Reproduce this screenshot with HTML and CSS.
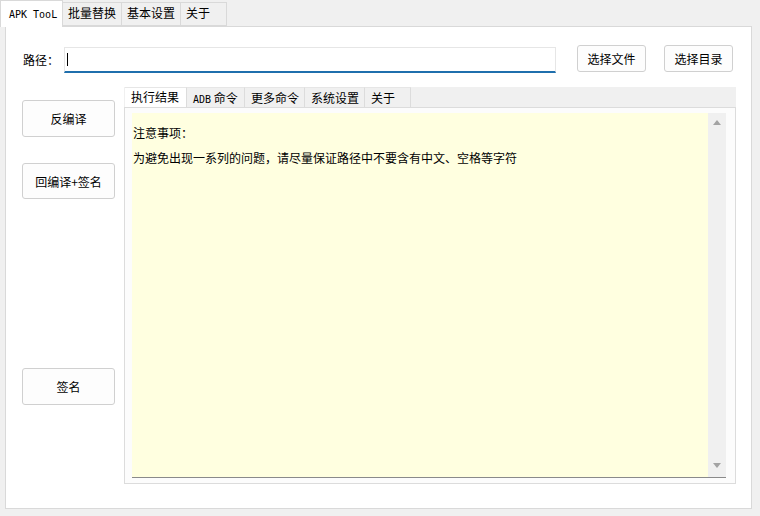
FILE: index.html
```html
<!DOCTYPE html>
<html>
<head>
    <meta charset="UTF-8">
    <title>APK TooL</title>
    <link rel="stylesheet" href="styles.css">
</head>
<body>
    <div class="tabbar">
        <div class="tab active"><span class="latin">APK TooL</span></div>
        <div class="tab">批量替换</div>
        <div class="tab">基本设置</div>
        <div class="tab tab-last">关于</div>
    </div>
    <div class="pane">
        <div class="path-row">
            <label class="path-label">路径：</label>
            <div class="path-input"><span class="caret"></span></div>
            <button class="btn btn-file">选择文件</button>
            <button class="btn btn-dir">选择目录</button>
        </div>
        <div class="main">
            <div class="actions">
                <button class="btn btn-action btn-decompile">反编译</button>
                <button class="btn btn-action btn-build">回编译+签名</button>
                <button class="btn btn-action btn-sign">签名</button>
            </div>
            <div class="subtabs">
                <div class="subtab-bar">
                    <div class="subtab active">执行结果</div>
                    <div class="subtab subtab-adb"><span class="latin">ADB</span> 命令</div>
                    <div class="subtab">更多命令</div>
                    <div class="subtab">系统设置</div>
                    <div class="subtab subtab-last">关于</div>
                </div>
                <div class="subpane">
                    <div class="log">
                        <div class="log-text">
                            <p>注意事项：</p>
                            <p>为避免出现一系列的问题，请尽量保证路径中不要含有中文、空格等字符</p>
                        </div>
                        <div class="scrollbar">
                            <span class="arrow up"></span>
                            <span class="arrow down"></span>
                        </div>
                    </div>
                </div>
            </div>
        </div>
    </div>
</body>
</html>
```
FILE: styles.css
```css
body {
    margin: 0;
    width: 760px;
    height: 516px;
    overflow: hidden;
    background-color: #f0f0f0;
    font-family: "Noto Sans CJK SC", "Liberation Sans", sans-serif;
    font-size: 12px;
    color: #000;
}
.latin {
    font-family: "DejaVu Sans Mono", "Liberation Mono", monospace;
    font-size: 10px;
    white-space: nowrap;
}
.tabbar {
    display: flex;
    height: 26px;
    padding-left: 2px;
}
.tab {
    box-sizing: border-box;
    height: 24px;
    margin-top: 2px;
    padding: 0 5px;
    line-height: 20px;
    white-space: nowrap;
    background-color: #f0f0f0;
    border: 1px solid #d9d9d9;
    border-left: none;
}
.tab-last {
    width: 46px;
}
.tab.active {
    width: 63px;
    height: 27px;
    margin: 0 0 -1px -2px;
    padding: 2px 0 0 8px;
    background-color: #fff;
    border-left: 1px solid #d9d9d9;
    border-bottom: none;
    position: relative;
    z-index: 1;
}
.pane {
    box-sizing: border-box;
    margin-left: 5px;
    width: 747px;
    height: 483px;
    padding: 18px 0 0 16px;
    background-color: #fff;
    border: 1px solid #d9d9d9;
}
.path-row {
    display: flex;
    align-items: flex-start;
    height: 28px;
}
.path-label {
    margin: 7px 0 0 1px;
    width: 36px;
    line-height: 16px;
}
.path-input {
    box-sizing: border-box;
    width: 492px;
    height: 26px;
    margin: 2px 0 0 5px;
    border: 1px solid #e6e6e6;
    border-bottom: 2px solid #1f6fad;
    padding: 5px 0 0 2px;
}
.caret {
    display: block;
    width: 1px;
    height: 13px;
    background-color: #000;
}
.btn {
    box-sizing: border-box;
    background-color: #fdfdfd;
    border: 1px solid #d0d0d0;
    border-radius: 3px;
    padding: 0;
    font-family: "Noto Sans CJK SC", "Liberation Sans", sans-serif;
    font-size: 12px;
    color: #000;
}
.btn-file, .btn-dir {
    width: 69px;
    height: 27px;
}
.btn-file {
    margin-left: 21px;
}
.btn-dir {
    margin-left: 18px;
}
.main {
    display: flex;
    margin-top: 14px;
}
.actions {
    display: flex;
    flex-direction: column;
    width: 93px;
}
.btn-action {
    width: 93px;
    height: 37px;
}
.btn-decompile {
    margin-top: 13px;
}
.btn-build {
    margin-top: 26px;
    height: 36px;
}
.btn-sign {
    margin-top: 169px;
}
.subtabs {
    margin-left: 9px;
    width: 612px;
    height: 397px;
}
.subtab-bar {
    display: flex;
    height: 20px;
    padding-left: 1px;
    background-color: #f0f0f0;
}
.subtab {
    box-sizing: border-box;
    width: 60px;
    height: 20px;
    padding: 0 6px;
    line-height: 20px;
    white-space: nowrap;
    border-right: 1px solid #dcdcdc;
    border-top: 1px solid #e6e6e6;
}
.subtab-adb {
    width: 58px;
}
.subtab-last {
    width: 46px;
}
.subtab.active {
    width: 62px;
    padding: 0 6px;
    background-color: #fff;
    line-height: 18px;
}
.subpane {
    box-sizing: border-box;
    display: flex;
    height: 377px;
    padding: 5px 9px 5px 7px;
    background-color: #fcfcfc;
    border: 1px solid #dcdcdc;
}
.log {
    flex: 1;
    display: flex;
    background-color: #ffffe0;
    border-bottom: 1px solid #8a8a8a;
}
.log-text {
    flex: 1;
    padding: 7px 0 0 1px;
}
.log-text p {
    margin: 0;
    line-height: 25px;
}
.scrollbar {
    display: flex;
    flex-direction: column;
    justify-content: space-between;
    align-items: center;
    width: 18px;
    padding: 7px 0 9px 0;
    background-color: #f0f0f0;
}
.arrow {
    width: 0;
    height: 0;
    border-left: 4px solid transparent;
    border-right: 4px solid transparent;
}
.arrow.up {
    border-bottom: 5px solid #a3a3a3;
}
.arrow.down {
    border-top: 5px solid #a3a3a3;
}
```
